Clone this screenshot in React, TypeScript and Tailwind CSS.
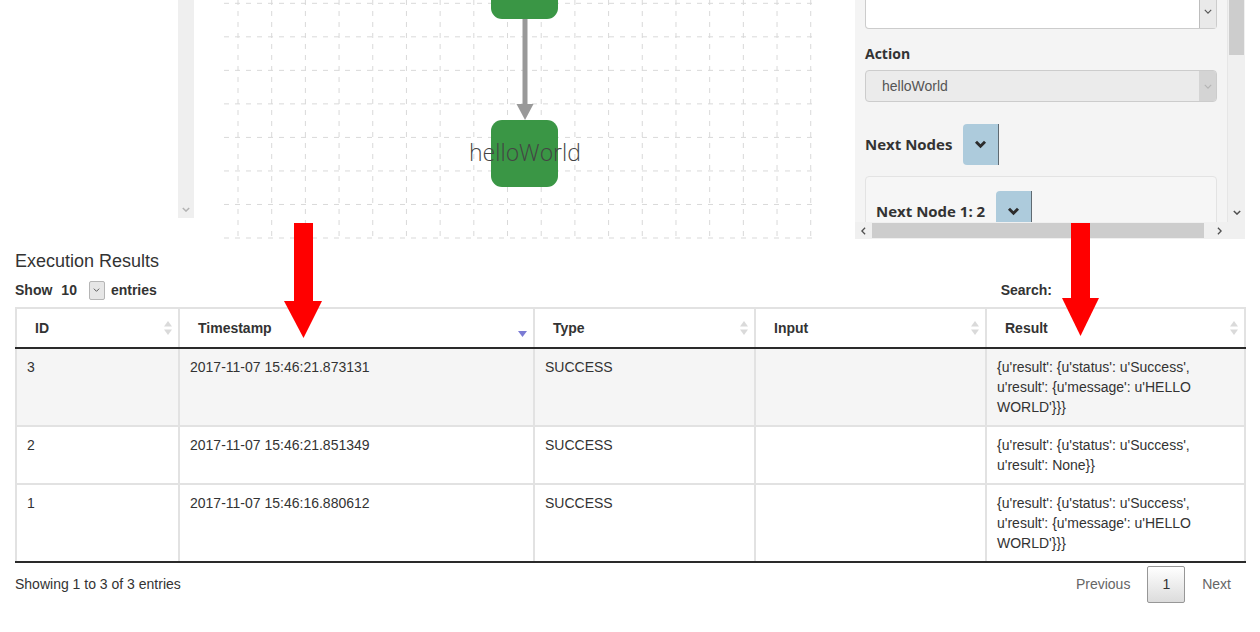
import { ReactElement } from "react";

function Chevron({ className = "", sw = 1.4 }: { className?: string; sw?: number }) {
  return (
    <svg viewBox="0 0 10 6" className={className} fill="none" stroke="currentColor" strokeWidth={sw}>
      <path d="M1 1l4 4 4-4" />
    </svg>
  );
}

function ChevronSide({ dir }: { dir: "left" | "right" }) {
  return (
    <svg viewBox="0 0 6 10" className="w-[5px] h-[8px] text-[#505050]" fill="none" stroke="currentColor" strokeWidth={1.6}>
      <path d={dir === "left" ? "M5 1L1 5l4 4" : "M1 1l4 4-4 4"} />
    </svg>
  );
}

function ToggleButton() {
  return (
    <div className="w-[36px] h-[41px] shrink-0 bg-[#adcbdc] rounded-l-[4px] border-r border-[#5f6a72] flex items-center justify-center text-[#2c2c2c]">
      <svg viewBox="0 0 14 10" className="w-[13px] h-[9px]" fill="none" stroke="currentColor" strokeWidth={3.2}>
        <path d="M2 2l5 5 5-5" />
      </svg>
    </div>
  );
}

function Canvas() {
  const vs = Array.from({ length: 18 }, (_, i) => 14 + i * 33.69);
  const hs = Array.from({ length: 8 }, (_, i) => 3.3 + i * 33.53);
  return (
    <svg width="594" height="239" className="shrink-0">
      {vs.map((x) => (
        <line key={"v" + x} x1={x} x2={x} y1={0} y2={239} stroke="#d9d9d9" strokeDasharray="5 6" />
      ))}
      {hs.map((y) => (
        <line key={"h" + y} x1={0} x2={594} y1={y} y2={y} stroke="#d9d9d9" strokeDasharray="5 6" />
      ))}
      <rect x={267} y={-48} width={67} height={67} rx={11} fill="#3a9645" />
      <line x1={301} x2={301} y1={19} y2={106} stroke="#999" strokeWidth={5} />
      <path d="M292.5 104h17L301 120z" fill="#999" />
      <rect x={267} y={120} width={67} height={67} rx={11} fill="#3a9645" />
      <text x={301} y={161} textAnchor="middle" fontSize={23} fontWeight={300} fill="#444" fontFamily="'Open Sans', sans-serif">
        helloWorld
      </text>
    </svg>
  );
}

function RightPanel() {
  return (
    <div className="w-[390px] h-[239px] shrink-0 flex flex-col">
      <div className="flex h-[222px]">
        <div className="w-[373px] bg-[#f4f4f4] border-r border-[#e6e6e6] px-[10px] overflow-hidden flex flex-col font-['Open_Sans',sans-serif] text-[#333]">
          <div className="h-[29px] shrink-0 bg-white border border-t-0 border-[#cccccc] rounded-b-[4px] flex justify-end">
            <div className="w-[17px] bg-[#e9e9e9] border-l border-[#bdbdbd] flex justify-center pt-[9px] text-[#555]">
              <Chevron className="w-[8px] h-[5px]" />
            </div>
          </div>
          <div className="mt-[15px] h-[20px] leading-[20px] font-bold text-[14px]">Action</div>
          <div className="mt-[6px] h-[32px] shrink-0 bg-[#ebebeb] border border-[#cccccc] rounded-[4px] flex items-center overflow-hidden">
            <span className="pl-[16px] flex-1 text-[14px] text-[#555] font-['Liberation_Sans',Arial,sans-serif]">helloWorld</span>
            <div className="w-[17px] self-stretch bg-[#d4d4d4] flex items-center justify-center text-[#b5b5b5]">
              <Chevron className="w-[8px] h-[5px]" />
            </div>
          </div>
          <div className="mt-[22px] h-[41px] shrink-0 flex items-center gap-[11px]">
            <span className="font-bold text-[15px]">Next Nodes</span>
            <ToggleButton />
          </div>
          <div className="mt-[11px] shrink-0 bg-[#f6f6f6] border border-[#e3e3e3] rounded-[4px] pl-[10px] pt-[14px] pb-[10px]">
            <div className="h-[41px] flex items-center gap-[11px]">
              <span className="font-bold text-[15px]">Next Node 1: 2</span>
              <ToggleButton />
            </div>
          </div>
        </div>
        <div className="w-[17px] bg-[#f0f0f0] flex flex-col justify-between items-center pb-[7px]">
          <div className="w-[15px] h-[55px] bg-[#cdcdcd]" />
          <Chevron className="w-[8px] h-[5px] text-[#505050]" sw={1.8} />
        </div>
      </div>
      <div className="h-[17px] flex items-center bg-[#f0f0f0]">
        <div className="w-[17px] flex justify-center">
          <ChevronSide dir="left" />
        </div>
        <div className="w-[332px] h-[15px] bg-[#cdcdcd]" />
        <div className="w-[7px]" />
        <div className="w-[17px] flex justify-center">
          <ChevronSide dir="right" />
        </div>
        <div className="w-[17px] h-full bg-[#f0f0f0]" />
      </div>
    </div>
  );
}

function SortBoth() {
  return (
    <svg width="8" height="14" viewBox="0 0 8 14" className="absolute right-[6px] top-1/2 -translate-y-1/2">
      <path d="M4 0L8 5.5H0z" fill="#dadada" />
      <path d="M4 14L8 8.5H0z" fill="#dadada" />
    </svg>
  );
}

function SortDesc() {
  return (
    <svg width="9" height="6" viewBox="0 0 9 6" className="absolute right-[6px] top-[22px]">
      <path d="M0 0h9L4.5 6z" fill="#7b7bd4" />
    </svg>
  );
}

export default function App(): ReactElement {
  type Row = { id: string; ts: string; type: string; input: string; result: string };
  const rows: Row[] = [
    {
      id: "3",
      ts: "2017-11-07 15:46:21.873131",
      type: "SUCCESS",
      input: "",
      result: "{u'result': {u'status': u'Success', u'result': {u'message': u'HELLO WORLD'}}}",
    },
    {
      id: "2",
      ts: "2017-11-07 15:46:21.851349",
      type: "SUCCESS",
      input: "",
      result: "{u'result': {u'status': u'Success', u'result': None}}",
    },
    {
      id: "1",
      ts: "2017-11-07 15:46:16.880612",
      type: "SUCCESS",
      input: "",
      result: "{u'result': {u'status': u'Success', u'result': {u'message': u'HELLO WORLD'}}}",
    },
  ];
  const cols = ["ID", "Timestamp", "Type", "Input", "Result"];

  return (
    <div className="w-[1260px] h-[632px] bg-white relative overflow-hidden font-['Liberation_Sans',Arial,sans-serif] text-[#333]">
      <div className="flex h-[239px]">
        <div className="w-[178px] shrink-0" />
        <div className="w-[16px] h-[218px] shrink-0 bg-[#efefef] flex items-end justify-center pb-[6px] text-[#b3b3b3]">
          <Chevron className="w-[8px] h-[5px]" sw={1.8} />
        </div>
        <div className="w-[30px] shrink-0" />
        <Canvas />
        <div className="w-[37px] shrink-0" />
        <RightPanel />
      </div>

      <div className="pl-[15px] pr-[14px] flex flex-col">
        <h2 className="mt-[12px] h-[20px] leading-[20px] text-[18px] font-normal">Execution Results</h2>
        <div className="mt-[9px] h-[20px] flex items-center justify-between text-[14px] font-bold">
          <div className="flex items-center">
            <span>Show</span>
            <span className="ml-[9px]">10</span>
            <span className="ml-[12px] w-[16px] h-[19px] bg-[#e6e6e6] border border-[#b5b5b5] rounded-[2px] flex items-center justify-center text-[#444]">
              <Chevron className="w-[7px] h-[4px]" sw={1.3} />
            </span>
            <span className="ml-[6px]">entries</span>
          </div>
          <span className="mr-[194px]">Search:</span>
        </div>

        <table className="mt-[7px] w-[1229px] table-fixed border-collapse text-[14px] leading-[20px]">
          <colgroup>
            <col className="w-[163px]" />
            <col className="w-[355px]" />
            <col className="w-[221px]" />
            <col className="w-[231px]" />
            <col className="w-[259px]" />
          </colgroup>
          <thead>
            <tr>
              {cols.map((c) => (
                <th
                  key={c}
                  className="relative text-left font-bold pl-[18px] pr-[20px] py-[9px] border-2 border-[#e2e2e2] border-b-[#2a2a2a]"
                >
                  {c}
                  {c === "Timestamp" ? <SortDesc /> : <SortBoth />}
                </th>
              ))}
            </tr>
          </thead>
          <tbody>
            {rows.map((r, i) => {
              const last = i === rows.length - 1;
              const cell =
                "align-top px-[10px] py-[8px] border-2 border-[#e2e2e2] " + (last ? "border-b-[#2a2a2a]" : "");
              return (
                <tr key={r.id} className={i === 0 ? "bg-[#f5f5f5]" : "bg-white"}>
                  <td className={cell}>{r.id}</td>
                  <td className={cell}>{r.ts}</td>
                  <td className={cell}>{r.type}</td>
                  <td className={cell}>{r.input}</td>
                  <td className={cell}>{r.result}</td>
                </tr>
              );
            })}
          </tbody>
        </table>

        <div className="mt-[3px] flex items-center justify-between text-[14px]">
          <span>Showing 1 to 3 of 3 entries</span>
          <div className="flex items-center text-[#666]">
            <span className="px-[14px] py-[7px] border border-transparent">Previous</span>
            <span className="ml-[2px] px-[14px] py-[7px] border border-[#979797] rounded-[2px] bg-gradient-to-b from-white to-[#dcdcdc] text-[#333]">
              1
            </span>
            <span className="ml-[2px] px-[14px] py-[7px] border border-transparent">Next</span>
          </div>
        </div>
      </div>

      <svg className="absolute left-[283px] top-[223px]" width="40" height="116" viewBox="0 0 40 116">
        <rect x="11" y="0" width="19" height="80" fill="#ff0000" />
        <path d="M1 78h38L20.5 115z" fill="#ff0000" />
      </svg>
      <svg className="absolute left-[1061px] top-[223px]" width="40" height="114" viewBox="0 0 40 114">
        <rect x="10" y="0" width="19" height="76" fill="#ff0000" />
        <path d="M1 75h37L19.5 113z" fill="#ff0000" />
      </svg>
    </div>
  );
}
